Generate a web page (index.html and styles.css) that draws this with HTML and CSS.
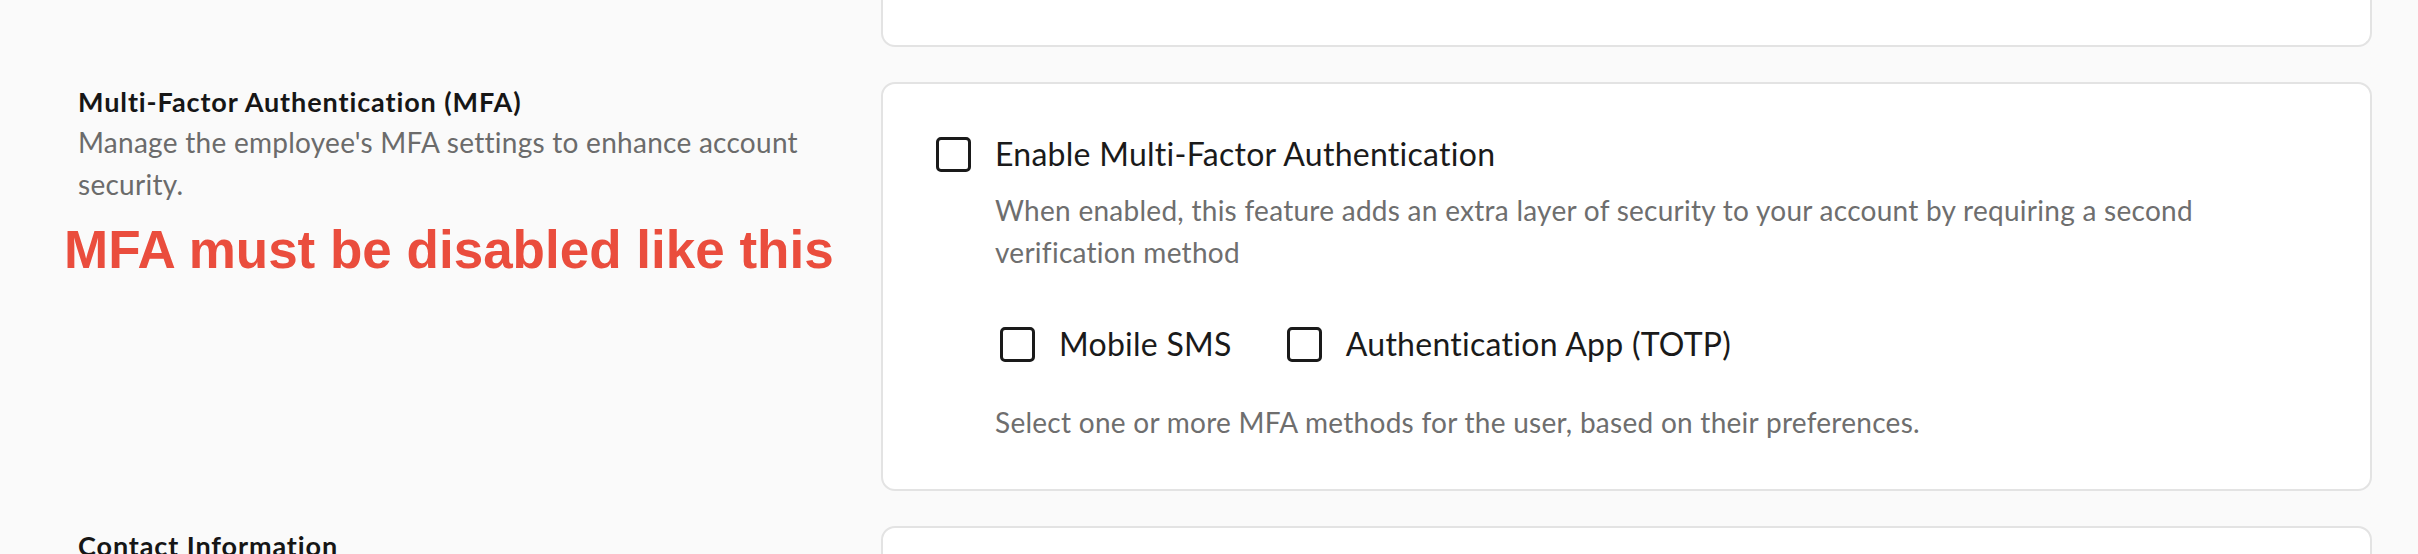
FILE: index.html
```html
<!DOCTYPE html>
<html lang="en">
<head>
<meta charset="utf-8">
<title>Employee settings</title>
<link rel="stylesheet" href="styles.css">
</head>
<body>
<main class="settings">
  <section class="row">
    <div class="info"></div>
    <div class="card card-cut"></div>
  </section>

  <section class="row">
    <div class="info">
      <h2 class="info-title">Multi-Factor Authentication (MFA)</h2>
      <p class="info-desc">Manage the employee's MFA settings to enhance account security.</p>
      <p class="note">MFA must be disabled like this</p>
    </div>
    <div class="card card-mfa">
      <label class="check check-main">
        <span class="box"></span>
        <span class="check-label">Enable Multi-Factor Authentication</span>
      </label>
      <p class="hint hint-main">When enabled, this feature adds an extra layer of security to your account by requiring a second verification method</p>
      <div class="methods">
        <label class="check">
          <span class="box"></span>
          <span class="check-label">Mobile SMS</span>
        </label>
        <label class="check">
          <span class="box"></span>
          <span class="check-label">Authentication App (TOTP)</span>
        </label>
      </div>
      <p class="hint hint-methods">Select one or more MFA methods for the user, based on their preferences.</p>
    </div>
  </section>

  <section class="row">
    <div class="info">
      <h2 class="info-title">Contact Information</h2>
    </div>
    <div class="card card-next"></div>
  </section>
</main>
</body>
</html>
```

FILE: styles.css
```css
html, body {
  margin: 0;
  padding: 0;
  background: #fafafa;
  height: 100%;
  overflow: hidden;
}

body {
  font-family: Lato, "Open Sans", "Noto Sans", sans-serif;
  color: #1a1a1a;
  letter-spacing: 0.27px;
}

.settings {
  display: flex;
  flex-direction: column;
  gap: 35px;
  padding: 0 46px 0 78px;
}

.row {
  display: grid;
  grid-template-columns: 755px 1fr;
  column-gap: 48px;
  align-items: start;
}

.info-title {
  margin: 0;
  font-size: 27px;
  line-height: 39px;
  font-weight: 700;
  letter-spacing: 0.9px;
  color: #161616;
}

.info-desc {
  margin: 0;
  font-size: 28px;
  line-height: 42px;
  color: #6b6b6b;
}

.note {
  margin: 14px 0 0 -14px;
  font-family: "Liberation Sans", Arial, sans-serif;
  font-weight: 700;
  font-size: 53px;
  line-height: 62px;
  letter-spacing: 0;
  white-space: nowrap;
  color: #ea4d3d;
}

.card {
  background: #ffffff;
  border: 2px solid #e3e3e3;
  border-radius: 14px;
}

.card-cut {
  height: 45px;
  border-top: 0;
  border-radius: 0 0 14px 14px;
}

.card-mfa {
  padding: 46px 53px 46px 53px;
}

.card-next {
  height: 200px;
}

.check {
  display: flex;
  align-items: center;
  gap: 24px;
  font-size: 32px;
  line-height: 48px;
  color: #1a1a1a;
}

.box {
  box-sizing: border-box;
  width: 35px;
  height: 35px;
  border: 3.5px solid #1a1a1a;
  border-radius: 5px;
  flex: none;
}

.hint {
  margin: 0;
  font-size: 28px;
  line-height: 42px;
  color: #6e6e6e;
}

.hint-main {
  margin: 11px 0 0 59px;
  max-width: 1220px;
}

.methods {
  display: flex;
  gap: 55px;
  margin: 47px 0 0 64px;
}

.hint-methods {
  margin: 33px 0 0 59px;
}
```
